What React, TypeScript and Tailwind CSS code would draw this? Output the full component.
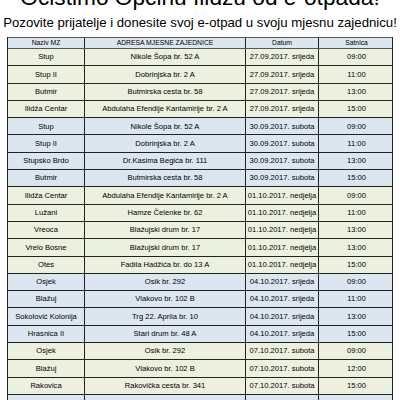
import React from 'react';

type Row = {
  mz: string;
  adresa: string;
  datum: string;
  satnica: string;
  tone: 'green' | 'blue';
};

const rows: Row[] = [
  { mz: 'Stup', adresa: 'Nikole Šopa br. 52 A', datum: '27.09.2017. srijeda', satnica: '09:00', tone: 'green' },
  { mz: 'Stup II', adresa: 'Dobrinjska br. 2 A', datum: '27.09.2017. srijeda', satnica: '11:00', tone: 'green' },
  { mz: 'Butmir', adresa: 'Butmirska cesta br. 58', datum: '27.09.2017. srijeda', satnica: '13:00', tone: 'green' },
  { mz: 'Ilidža Centar', adresa: 'Abdulaha Efendije Kantamirije br. 2 A', datum: '27.09.2017. srijeda', satnica: '15:00', tone: 'green' },
  { mz: 'Stup', adresa: 'Nikole Šopa br. 52 A', datum: '30.09.2017. subota', satnica: '09:00', tone: 'blue' },
  { mz: 'Stup II', adresa: 'Dobrinjska br. 2 A', datum: '30.09.2017. subota', satnica: '11:00', tone: 'blue' },
  { mz: 'Stupsko Brdo', adresa: 'Dr.Kasima Begića br. 111', datum: '30.09.2017. subota', satnica: '13:00', tone: 'blue' },
  { mz: 'Butmir', adresa: 'Butmirska cesta br. 58', datum: '30.09.2017. subota', satnica: '15:00', tone: 'blue' },
  { mz: 'Ilidža Centar', adresa: 'Abdulaha Efendije Kantamirije br. 2 A', datum: '01.10.2017. nedjelja', satnica: '09:00', tone: 'green' },
  { mz: 'Lužani', adresa: 'Hamze Čelenke br. 62', datum: '01.10.2017. nedjelja', satnica: '11:00', tone: 'green' },
  { mz: 'Vreoca', adresa: 'Blažujski drum br. 17', datum: '01.10.2017. nedjelja', satnica: '13:00', tone: 'green' },
  { mz: 'Vrelo Bosne', adresa: 'Blažujski drum br. 17', datum: '01.10.2017. nedjelja', satnica: '13:00', tone: 'green' },
  { mz: 'Otes', adresa: 'Fadila Hadžića br. do 13 A', datum: '01.10.2017. nedjelja', satnica: '15:00', tone: 'green' },
  { mz: 'Osjek', adresa: 'Osik br. 292', datum: '04.10.2017. srijeda', satnica: '09:00', tone: 'blue' },
  { mz: 'Blažuj', adresa: 'Vlakovo br. 102 B', datum: '04.10.2017. srijeda', satnica: '11:00', tone: 'blue' },
  { mz: 'Sokolović Kolonija', adresa: 'Trg 22. Aprila br. 10', datum: '04.10.2017. srijeda', satnica: '13:00', tone: 'blue' },
  { mz: 'Hrasnica II', adresa: 'Stari drum br. 48 A', datum: '04.10.2017. srijeda', satnica: '15:00', tone: 'blue' },
  { mz: 'Osjek', adresa: 'Osik br. 292', datum: '07.10.2017. subota', satnica: '09:00', tone: 'green' },
  { mz: 'Blažuj', adresa: 'Vlakovo br. 102 B', datum: '07.10.2017. subota', satnica: '12:00', tone: 'green' },
  { mz: 'Rakovica', adresa: 'Rakovička cesta br. 341', datum: '07.10.2017. subota', satnica: '15:00', tone: 'green' },
  { mz: 'Sokolović Kolonija', adresa: 'Trg 22. Aprila br. 10', datum: '08.10.2017. nedjelja', satnica: '09:00', tone: 'blue' },
];

function App() {
  return (
    <div className="h-[400px] w-[400px] overflow-hidden bg-white text-black font-['Liberation_Sans',Arial,sans-serif]">
      {/* Title */}
      <div className="mt-[-14.2px] h-[22.7px] text-center text-[22.7px] leading-none whitespace-nowrap">
        Očistimo Općinu Ilidžu od e-otpada!
      </div>
      <div className="mt-[7.8px] h-[13.2px] text-center text-[13.2px] leading-none whitespace-nowrap">
        Pozovite prijatelje i donesite svoj e-otpad u svoju mjesnu zajednicu!
      </div>

      {/* Table */}
      <div className="mt-[7.5px] ml-[7px] w-[386px] border-l border-r border-[#222]">
        <div className="grid h-[12px] grid-cols-[77px_161px_73px_75px] border-t border-b border-[#555] bg-[#dce6f1] text-[6.8px] leading-none">
          <div className="flex items-center justify-center border-r border-[#222]">Naziv MZ</div>
          <div className="flex items-center justify-center border-r border-[#222]">ADRESA MJESNE ZAJEDNICE</div>
          <div className="flex items-center justify-center border-r border-[#222]">Datum</div>
          <div className="flex items-center justify-center">Satnica</div>
        </div>
        {rows.map((r, i) => (
          <div
            key={i}
            className={`grid h-[17.3px] grid-cols-[77px_161px_73px_75px] border-b border-[#222] text-[7.6px] leading-none whitespace-nowrap ${
              r.tone === 'green' ? 'bg-[#ebf1de]' : 'bg-[#dce6f1]'
            }`}
          >
            <div className="flex items-center justify-center border-r border-[#222]">{r.mz}</div>
            <div className="flex items-center justify-center border-r border-[#222]">{r.adresa}</div>
            <div className="flex items-center justify-center border-r border-[#222]">{r.datum}</div>
            <div className="flex items-center justify-center">{r.satnica}</div>
          </div>
        ))}
      </div>
    </div>
  );
}

export default App;
